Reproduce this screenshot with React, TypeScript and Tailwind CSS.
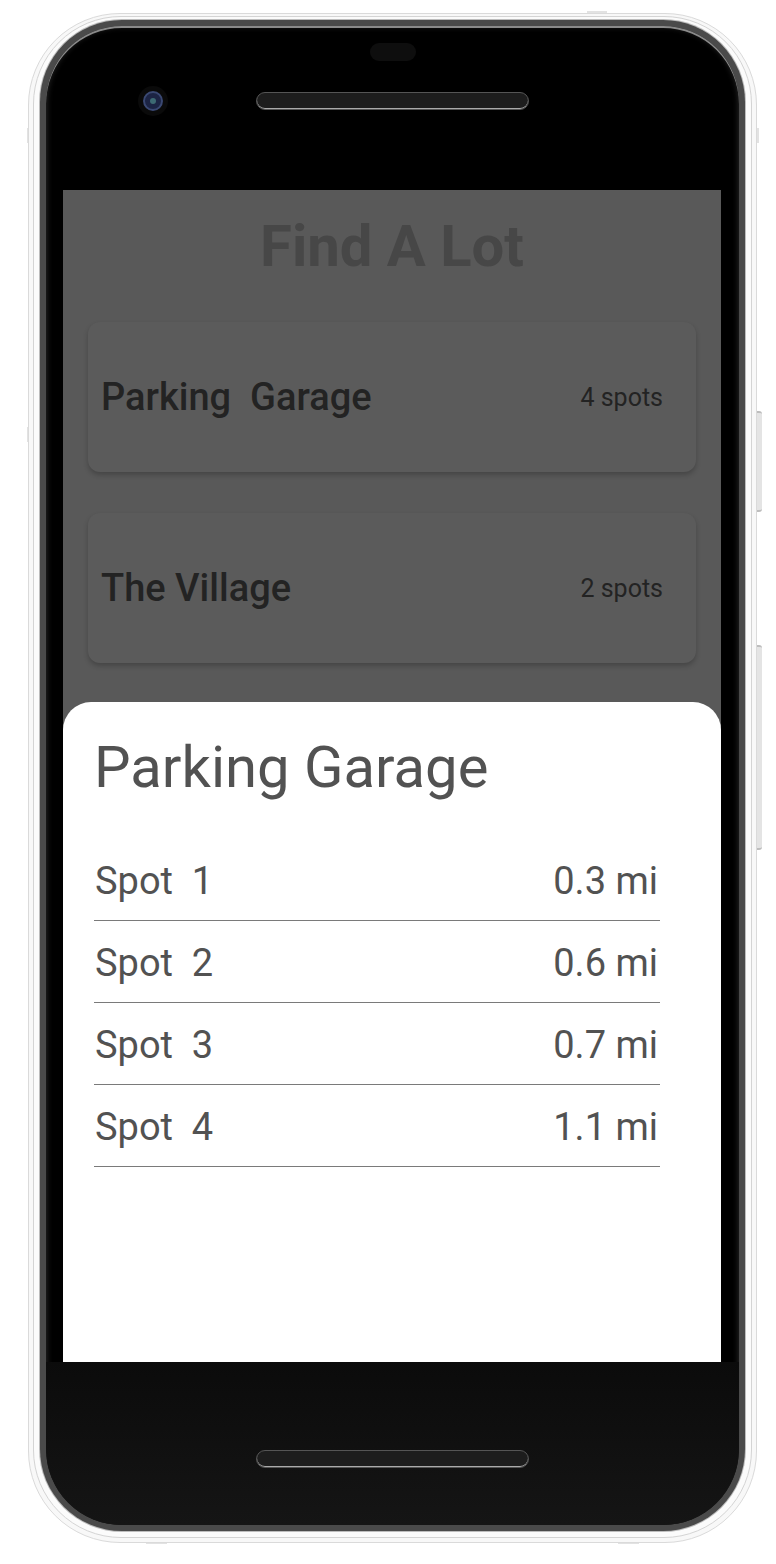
import React from "react";

const spots = [
  { name: "Spot  1", dist: "0.3 mi" },
  { name: "Spot  2", dist: "0.6 mi" },
  { name: "Spot  3", dist: "0.7 mi" },
  { name: "Spot  4", dist: "1.1 mi" },
];

const lots = [
  { name: "Parking  Garage", spots: "4 spots" },
  { name: "The Village", spots: "2 spots" },
];

function Speaker() {
  return <div className="w-[273px] h-[18px] rounded-full bg-[#1d1d1d] border border-[#555] shadow-[inset_0_-1px_0_#aaa]" />;
}

export default function App() {
  return (
    <div
      className="relative w-[776px] h-[1564px] bg-white overflow-hidden"
      style={{ fontFamily: "Roboto, 'Noto Sans', 'Liberation Sans', sans-serif" }}
    >
      {/* side tabs / buttons (decorative drawing of the device) */}
      <div className="absolute left-[587px] top-[11px] w-[20px] h-[9px] bg-[#e2e2e2]" />
      <div className="absolute left-[27px] top-[128px] w-[10px] h-[15px] bg-[#e2e2e2]" />
      <div className="absolute left-[27px] top-[427px] w-[10px] h-[15px] bg-[#e2e2e2]" />
      <div className="absolute left-[749px] top-[128px] w-[10px] h-[15px] bg-[#e2e2e2]" />
      <div className="absolute left-[146px] top-[1534px] w-[21px] h-[10px] bg-[#e2e2e2]" />
      <div className="absolute left-[618px] top-[1534px] w-[21px] h-[10px] bg-[#e2e2e2]" />
      <div className="absolute left-[756px] top-[411px] w-[6px] h-[101px] rounded-r-[3px] bg-[#e4e4e4] border-y-2 border-[#bdbdbd]" />
      <div className="absolute left-[756px] top-[645px] w-[6px] h-[205px] rounded-r-[3px] bg-[#e4e4e4] border-y-2 border-[#bdbdbd]" />

      {/* outer frame */}
      <div className="absolute left-[28px] top-[13px] w-[729px] h-[1530px] rounded-[92px] border border-[#dadada] bg-[#f8f8f8] pl-[4px] pt-[2px]">
        <div className="w-[719px] h-[1522px] rounded-[88px] border border-[#d4d4d4] bg-[#fbfbfb] pl-[6px] pt-[3px]">
          {/* dark ring */}
          <div className="w-[705px] h-[1511px] rounded-[82px] bg-[#4a4a4a] p-[6px] shadow-[0_0_0_1px_#bdbdbd]">
            {/* black body */}
            <div className="w-full h-full rounded-[76px] overflow-hidden bg-black shadow-[inset_0_2px_0_#8a8a8a,inset_0_0_6px_#333] flex flex-col">
              {/* top bezel */}
              <div className="h-[164px] flex flex-col items-center pt-[17px]">
                <div className="w-[46px] h-[18px] rounded-full bg-[#0e0e0e]" />
                <div className="self-stretch flex items-center pl-[92px] mt-[25px] gap-[88px]">
                  <div className="w-[30px] h-[30px] rounded-full bg-[#0a0a0a] flex items-center justify-center">
                    <div className="w-[20px] h-[20px] rounded-full bg-[#1c2444] border-2 border-[#3a4872] flex items-center justify-center">
                      <div className="w-[6px] h-[6px] rounded-full bg-[#3d6a73]" />
                    </div>
                  </div>
                  <Speaker />
                </div>
              </div>

              {/* screen */}
              <div className="ml-[17px] relative w-[658px] h-[1172px] bg-[#595959] overflow-hidden">
                <div className="flex flex-col items-center pt-[27px]">
                  <h1 className="text-[58px] leading-none font-bold text-[#474747]">Find A Lot</h1>
                  <div className="mt-[47px] w-[608px] flex flex-col gap-[41px]">
                    {lots.map((l) => (
                      <div
                        key={l.name}
                        className="h-[150px] rounded-[12px] bg-[#5b5b5b] shadow-[0_3px_5px_rgba(0,0,0,0.22)] flex items-center justify-between pl-[13px] pr-[33px]"
                      >
                        <span className="text-[38px] leading-none font-medium text-[#232323] whitespace-pre">{l.name}</span>
                        <span className="text-[25px] leading-none text-[#232323]">{l.spots}</span>
                      </div>
                    ))}
                  </div>
                </div>

                {/* bottom sheet (overlay) */}
                <div className="absolute left-0 bottom-0 w-full h-[660px] bg-white rounded-t-[28px] pt-[36px]">
                  <h2 className="ml-[31px] text-[58px] leading-none font-normal text-[#525252]">Parking Garage</h2>
                  <div className="ml-[31px] w-[566px] mt-[43px] flex flex-col">
                    {spots.map((s) => (
                      <div
                        key={s.name}
                        className="flex justify-between pt-[23px] pb-[20px] pr-[2px] pl-[1px] border-b border-[#7a7a7a]"
                      >
                        <span className="text-[38px] leading-none text-[#525252] whitespace-pre">{s.name}</span>
                        <span className="text-[38px] leading-none text-[#525252]">{s.dist}</span>
                      </div>
                    ))}
                  </div>
                </div>
              </div>

              {/* bottom bezel */}
              <div className="flex-1 bg-[linear-gradient(to_bottom,#0b0b0b,#151515)] flex justify-center pt-[88px]">
                <Speaker />
              </div>
            </div>
          </div>
        </div>
      </div>
    </div>
  );
}
